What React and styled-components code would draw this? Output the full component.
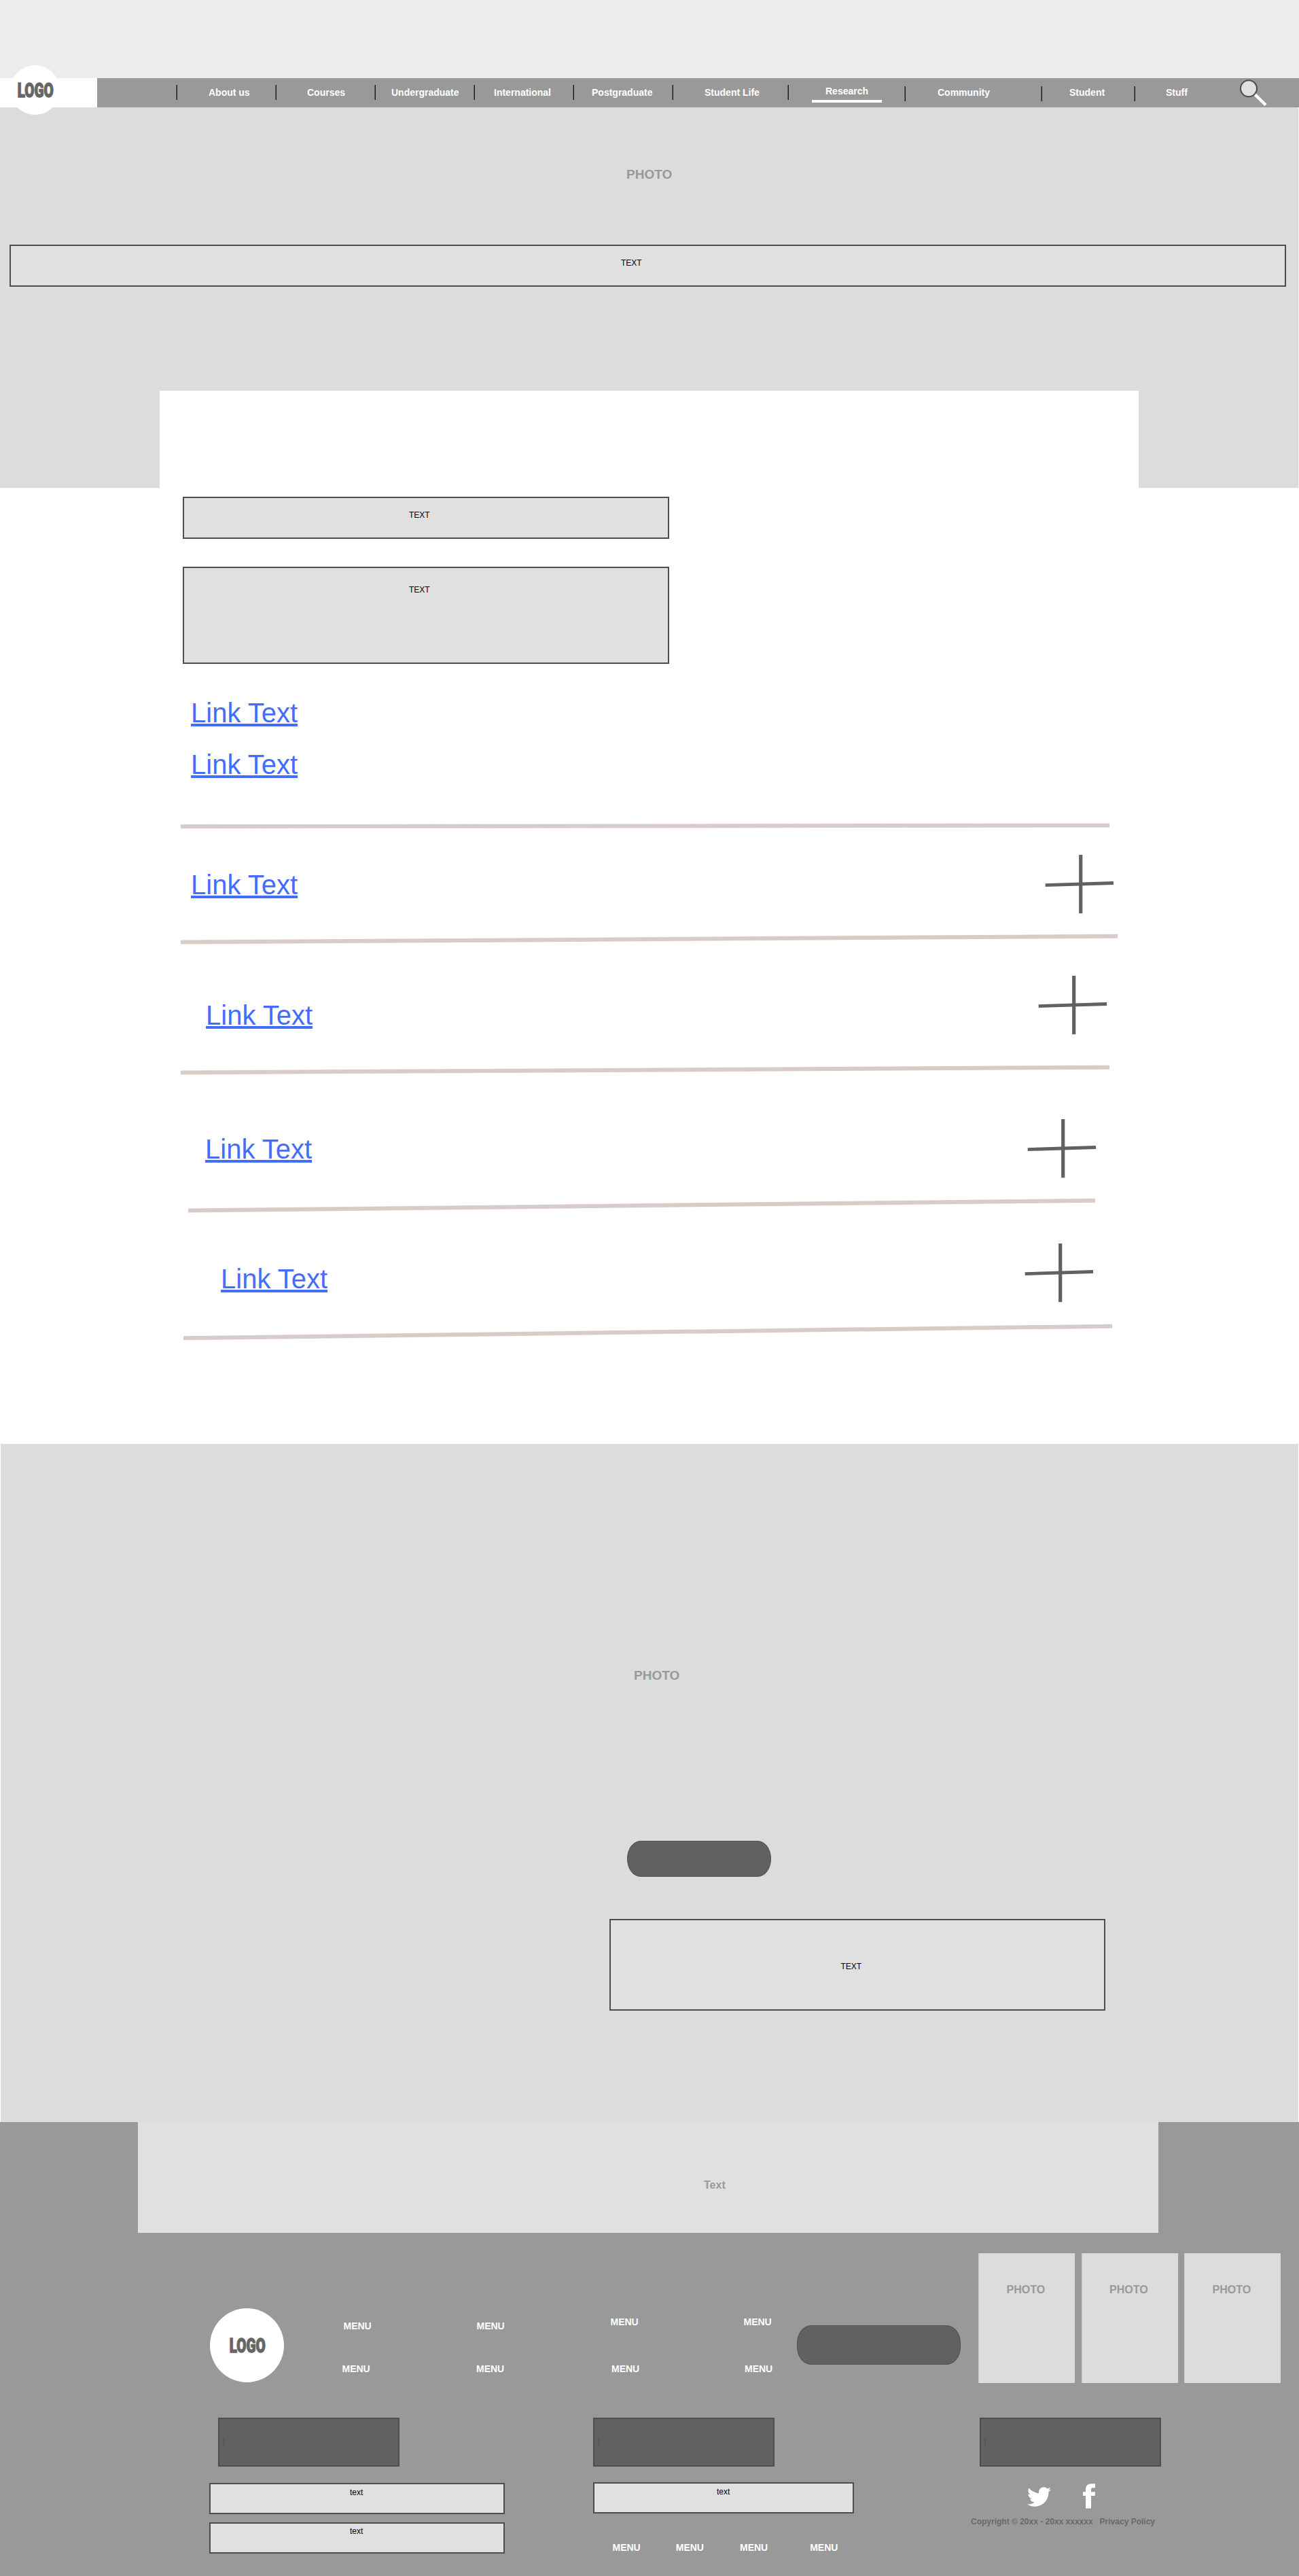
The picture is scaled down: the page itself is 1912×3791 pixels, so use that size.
import React from "react";
import styled, { createGlobalStyle } from "styled-components";
import { FaTwitter } from "react-icons/fa";

const GlobalStyle = createGlobalStyle`
  *, *::before, *::after { box-sizing: border-box; }
  html, body { margin: 0; padding: 0; background: #fff; }
  body { font-family: "Liberation Sans", Arial, sans-serif; }
`;

const Page = styled.div`
  width: 1912px;
  height: 3791px;
  overflow: hidden;
  display: flex;
  flex-direction: column;
  background: #fff;
`;

/* ---------- shared parts ---------- */

const LogoBadge = styled.div`
  width: ${(p) => p.$size}px;
  height: ${(p) => p.$size}px;
  border-radius: 50%;
  background: #fff;
  display: flex;
  align-items: center;
  justify-content: center;
  flex: none;
`;

const LogoText = styled.span`
  display: block;
  font-family: Roboto, "Liberation Sans", sans-serif;
  font-weight: 900;
  font-size: 29px;
  line-height: 36px;
  color: #666;
  -webkit-text-stroke: 1.4px #666;
  transform: translate(1px, 0) scaleX(0.71);
`;

const Logo = ({ size }) => (
  <LogoBadge $size={size}>
    <LogoText>LOGO</LogoText>
  </LogoBadge>
);

const TextBox = styled.div`
  width: ${(p) => p.$w}px;
  height: ${(p) => p.$h}px;
  margin: ${(p) => p.$m || "0"};
  padding: ${(p) => p.$pad};
  flex: none;
  border: 2px solid #4d4d4d;
  background: #e0e0e0;
  color: #000;
  font-size: 12px;
  line-height: 14px;
`;

const PhotoLabel = styled.div`
  font-weight: bold;
  font-size: ${(p) => p.$size}px;
  line-height: 22px;
  color: #999;
`;

const Pill = styled.div`
  flex: none;
  width: ${(p) => p.$w}px;
  height: ${(p) => p.$h}px;
  margin: ${(p) => p.$m};
  border: 1px solid #525252;
  border-radius: ${(p) => p.$r};
  background: #616161;
`;

/* ---------- header ---------- */

const TopStrip = styled.div`
  height: 115px;
  flex: none;
  background: #ececec;
`;

const Nav = styled.nav`
  position: relative;
  height: 43px;
  flex: none;
  display: flex;
  background: #999;
`;

const Brand = styled.div`
  position: relative;
  width: 143px;
  margin-right: 117px;
  background: #fff;
`;

const BrandBadge = styled.div`
  position: absolute;
  left: 15px;
  top: -19px;
`;

const NavCell = styled.div`
  width: ${(p) => p.$w}px;
  flex: none;
  display: flex;
  align-items: flex-start;
`;

const Separator = styled.span`
  width: 2px;
  height: 22px;
  margin-top: ${(p) => p.$top}px;
  margin-left: -1px;
  background: linear-gradient(90deg, #5c5c5c 50%, #1c1c1c 50%);
`;

const NavLink = styled.a`
  margin-top: ${(p) => (p.$active ? 9 : 11)}px;
  margin-left: ${(p) => p.$x - (p.$active ? 20 : 0)}px;
  padding: ${(p) => (p.$active ? "0 20px 3px" : "0")};
  border-bottom: ${(p) => (p.$active ? "4px solid #fff" : "none")};
  font-size: 14px;
  font-weight: bold;
  line-height: 20px;
  white-space: nowrap;
  color: #fff;
`;

const SearchIcon = styled.svg`
  display: block;
  width: 42px;
  height: 43px;
  margin-left: 76px;
`;

const navItems = [
  { label: "About us", w: 146, x: 46, top: 10 },
  { label: "Courses", w: 146, x: 45, top: 10 },
  { label: "Undergraduate", w: 146, x: 23, top: 10 },
  { label: "International", w: 146, x: 28, top: 10 },
  { label: "Postgraduate", w: 146, x: 26, top: 10 },
  { label: "Student Life", w: 170, x: 46, top: 10 },
  { label: "Research", w: 172, x: 54, top: 10, active: true },
  { label: "Community", w: 201, x: 47, top: 12 },
  { label: "Student", w: 137, x: 40, top: 12 },
  { label: "Stuff", w: 242, x: 45, top: 12, search: true },
];

/* ---------- hero ---------- */

const Hero = styled.section`
  height: 560px;
  flex: none;
  display: flex;
  flex-direction: column;
  padding-top: 88px;
  background: #dcdcdc;
  border-right: 1px solid #f4f4f4;
`;

const HeroLabel = styled.div`
  padding-left: 922px;
  height: 114px;
`;

const HeroPanel = styled.div`
  width: 1441px;
  height: 143px;
  margin: auto 0 0 235px;
  background: #fff;
`;

/* ---------- body ---------- */

const Intro = styled.section`
  height: 493px;
  flex: none;
  display: flex;
  flex-direction: column;
  align-items: flex-start;
  padding-top: 13px;
`;

const TextLink = styled.a`
  display: block;
  margin-left: ${(p) => p.$x}px;
  margin-top: ${(p) => p.$top}px;
  font-size: 40px;
  line-height: 46px;
  color: #446dff;
  white-space: nowrap;
  text-decoration: underline;
  text-decoration-thickness: 4px;
  text-underline-offset: 2px;
  text-decoration-skip-ink: none;
`;

const AccordionRow = styled.div`
  height: ${(p) => p.$h}px;
  flex: none;
  display: flex;
  align-items: flex-start;
  justify-content: space-between;
`;

const PlusSvg = styled.svg`
  display: block;
  width: 102px;
  height: 88px;
  margin-top: ${(p) => p.$top}px;
  margin-right: ${(p) => p.$right}px;
`;

const RuleSvg = styled.svg`
  display: block;
  flex: none;
  margin-left: ${(p) => p.$x}px;
`;

const Rule = ({ x, w, h, y1, y2 }) => (
  <RuleSvg $x={x} width={w} height={h}>
    <line x1="0" y1={y1} x2={w} y2={y2} stroke="#d7ccc8" strokeWidth="6" />
  </RuleSvg>
);

const Plus = ({ top, right }) => (
  <PlusSvg $top={top} $right={right} viewBox="0 0 102 88">
    <line x1="0.7" y1="45.6" x2="101" y2="42.5" stroke="#616161" strokeWidth="4.8" />
    <line x1="52.7" y1="1" x2="52.7" y2="87.2" stroke="#616161" strokeWidth="5.2" />
  </PlusSvg>
);

const rows = [
  { h: 154, link: [281, 59], plus: [37, 272], rule: { x: 266, w: 1379, h: 16, y1: 12.6, y2: 3.7 } },
  { h: 177, link: [303, 81], plus: [45, 282], rule: { x: 266, w: 1367, h: 15, y1: 11.5, y2: 3.7 } },
  { h: 181, link: [302, 86], plus: [64, 298], rule: { x: 277, w: 1335, h: 22, y1: 18.5, y2: 3.8 } },
  { h: 163, link: [325, 74], plus: [44, 302], rule: { x: 270, w: 1367, h: 25, y1: 21.2, y2: 3.7 } },
];

/* ---------- photo section ---------- */

const PhotoSection = styled.section`
  height: 998px;
  margin: auto 1px 0;
  flex: none;
  display: flex;
  flex-direction: column;
  align-items: flex-start;
  padding-top: 330px;
  background: #dcdcdc;
`;

const PhotoSectionLabel = styled.div`
  margin-left: 932px;
`;

/* ---------- footer ---------- */

const Footer = styled.footer`
  height: 668px;
  flex: none;
  background: #999;
`;

const Banner = styled.div`
  width: 1502px;
  height: 163px;
  margin-left: 203px;
  padding: 85px 0 0 833px;
  background: #e0e0e0;
  color: #999;
  font-size: 16px;
  font-weight: bold;
  line-height: 16px;
`;

const FooterTop = styled.div`
  height: 272px;
  display: flex;
  align-items: flex-start;
`;

const FooterLogo = styled.div`
  margin: 111px 0 0 308.5px;
`;

const MenuColumn = styled.div`
  width: ${(p) => p.$w}px;
  padding-top: ${(p) => p.$top}px;
  display: flex;
  flex-direction: column;
  gap: ${(p) => p.$gap}px;
  flex: none;
`;

const MenuLink = styled.a`
  margin-left: ${(p) => p.$x || 0}px;
  color: #fff;
  font-size: 14px;
  font-weight: bold;
  line-height: 16px;
`;

const Photos = styled.div`
  display: flex;
  gap: 9.5px;
  margin: 30px 0 0 26px;
`;

const PhotoCard = styled.div`
  width: 142px;
  height: 191px;
  padding: 43px 0 0 41.5px;
  background: #dcdcdc;
  box-shadow: inset 1px 0 #cdcdcd;
`;

const FooterBottom = styled.div`
  display: flex;
  align-items: flex-start;
`;

const FooterColumn = styled.div`
  width: ${(p) => p.$w}px;
  margin-left: ${(p) => p.$x || 0}px;
  flex: none;
`;

const Heading = styled.div`
  width: 267px;
  height: 72px;
  margin-left: ${(p) => p.$x || 0}px;
  display: flex;
  align-items: center;
  padding-left: 5px;
  border: 2px solid #4d4d4d;
  background: #616161;
`;

const Caret = styled.span`
  width: 2px;
  height: 12px;
  background: #5a5a5a;
`;

const BottomMenu = styled.div`
  display: flex;
  gap: ${(p) => p.$gap}px;
  margin: 42px 0 0 28.5px;
`;

const Social = styled.div`
  display: flex;
  align-items: flex-start;
  height: 41px;
  margin-top: 24px;
  color: #fff;
`;

const Bird = styled(FaTwitter)`
  width: 35px;
  height: 35px;
  margin: 3px 0 0 82px;
`;

const FbSvg = styled.svg`
  width: 18px;
  height: 37px;
  margin: 1px 0 0 47px;
  fill: #fff;
`;

const Legal = styled.div`
  margin-top: 9px;
  margin-left: -1px;
  font-size: 12px;
  font-weight: bold;
  line-height: 14px;
  white-space: pre;
  color: #6a6a6a;
`;

export default function App() {
  return (
    <Page>
      <GlobalStyle />
      <TopStrip />
      <Nav>
        <Brand>
          <BrandBadge>
            <Logo size={73} />
          </BrandBadge>
        </Brand>
        {navItems.map((n) => (
          <NavCell key={n.label} $w={n.w}>
            <Separator $top={n.top} />
            <NavLink $x={n.x} $active={n.active}>{n.label}</NavLink>
            {n.search && (
              <SearchIcon viewBox="0 0 42 43">
                <line x1="22" y1="23" x2="39" y2="39.5" stroke="#fff" strokeWidth="4.5" />
                <circle cx="14" cy="15.3" r="12" fill="#e0e0e0" stroke="#4d4d4d" strokeWidth="2" />
              </SearchIcon>
            )}
          </NavCell>
        ))}
      </Nav>

      <Hero>
        <HeroLabel>
          <PhotoLabel $size={19}>PHOTO</PhotoLabel>
        </HeroLabel>
        <TextBox $w={1879} $h={62} $m="0 0 0 14px" $pad="18px 0 0 898px">TEXT</TextBox>
        <HeroPanel />
      </Hero>

      <Intro>
        <TextBox $w={716} $h={62} $m="0 0 0 269px" $pad="18px 0 0 331px">TEXT</TextBox>
        <TextBox $w={716} $h={143} $m="41px 0 0 269px" $pad="25px 0 0 331px">TEXT</TextBox>
        <TextLink $x={281} $top={49}>Link Text</TextLink>
        <TextLink $x={281} $top={30}>Link Text</TextLink>
      </Intro>
      <Rule x={266} w={1367} h={9} y1={5.3} y2={3.7} />
      {rows.map((r, i) => (
        <React.Fragment key={i}>
          <AccordionRow $h={r.h}>
            <TextLink $x={r.link[0]} $top={r.link[1]}>Link Text</TextLink>
            <Plus top={r.plus[0]} right={r.plus[1]} />
          </AccordionRow>
          <Rule {...r.rule} />
        </React.Fragment>
      ))}

      <PhotoSection>
        <PhotoSectionLabel>
          <PhotoLabel $size={19}>PHOTO</PhotoLabel>
        </PhotoSectionLabel>
        <Pill $w={212} $h={53} $m="232px 0 0 921.5px" $r="20px / 26px" />
        <TextBox $w={730} $h={135} $m="62px 0 0 895.5px" $pad="61px 0 0 339px">TEXT</TextBox>
      </PhotoSection>

      <Footer>
        <Banner>Text</Banner>
        <FooterTop>
          <FooterLogo>
            <Logo size={109} />
          </FooterLogo>
          <MenuColumn $w={284} $top={129} $gap={47}>
            <MenuLink $x={88}>MENU</MenuLink>
            <MenuLink $x={86}>MENU</MenuLink>
          </MenuColumn>
          <MenuColumn $w={197} $top={129} $gap={47}>
            <MenuLink>MENU</MenuLink>
            <MenuLink $x={-0.5}>MENU</MenuLink>
          </MenuColumn>
          <MenuColumn $w={196} $top={123} $gap={53}>
            <MenuLink>MENU</MenuLink>
            <MenuLink $x={1.5}>MENU</MenuLink>
          </MenuColumn>
          <MenuColumn $w={78.5} $top={123} $gap={53}>
            <MenuLink>MENU</MenuLink>
            <MenuLink $x={1.5}>MENU</MenuLink>
          </MenuColumn>
          <Pill $w={241} $h={58} $m="136px 0 0 0" $r="21px / 26px" />
          <Photos>
            {[0, 1, 2].map((i) => (
              <PhotoCard key={i}>
                <PhotoLabel $size={16}>PHOTO</PhotoLabel>
              </PhotoCard>
            ))}
          </Photos>
        </FooterTop>
        <FooterBottom>
          <FooterColumn $w={565} $x={308}>
            <Heading $x={13}><Caret /></Heading>
            <TextBox $w={435} $h={46} $m="24px 0 0" $pad="5px 0 0 205px">text</TextBox>
            <TextBox $w={435} $h={46} $m="12px 0 0" $pad="4px 0 0 205px">text</TextBox>
          </FooterColumn>
          <FooterColumn $w={557}>
            <Heading><Caret /></Heading>
            <TextBox $w={384} $h={46} $m="23px 0 0" $pad="5px 0 0 180px">text</TextBox>
            <BottomMenu $gap={53}>
              <MenuLink>MENU</MenuLink>
              <MenuLink $x={-1}>MENU</MenuLink>
              <MenuLink>MENU</MenuLink>
              <MenuLink $x={9}>MENU</MenuLink>
            </BottomMenu>
          </FooterColumn>
          <FooterColumn $w={400}>
            <Heading $x={12}><Caret /></Heading>
            <Social>
              <Bird />
              <FbSvg viewBox="0 0 18 37">
                <path d="M18 .3V6.2H14.4C12.6 6.2 12 7.2 12 8.8V12.3H18L17.6 18H12V36.5H4V18H0V12.3H4V8.4C4 3.2 6.8.2 12.6.2Z" />
              </FbSvg>
            </Social>
            <Legal>{"Copyright © 20xx - 20xx xxxxxx   Privacy Policy"}</Legal>
          </FooterColumn>
        </FooterBottom>
      </Footer>
    </Page>
  );
}
